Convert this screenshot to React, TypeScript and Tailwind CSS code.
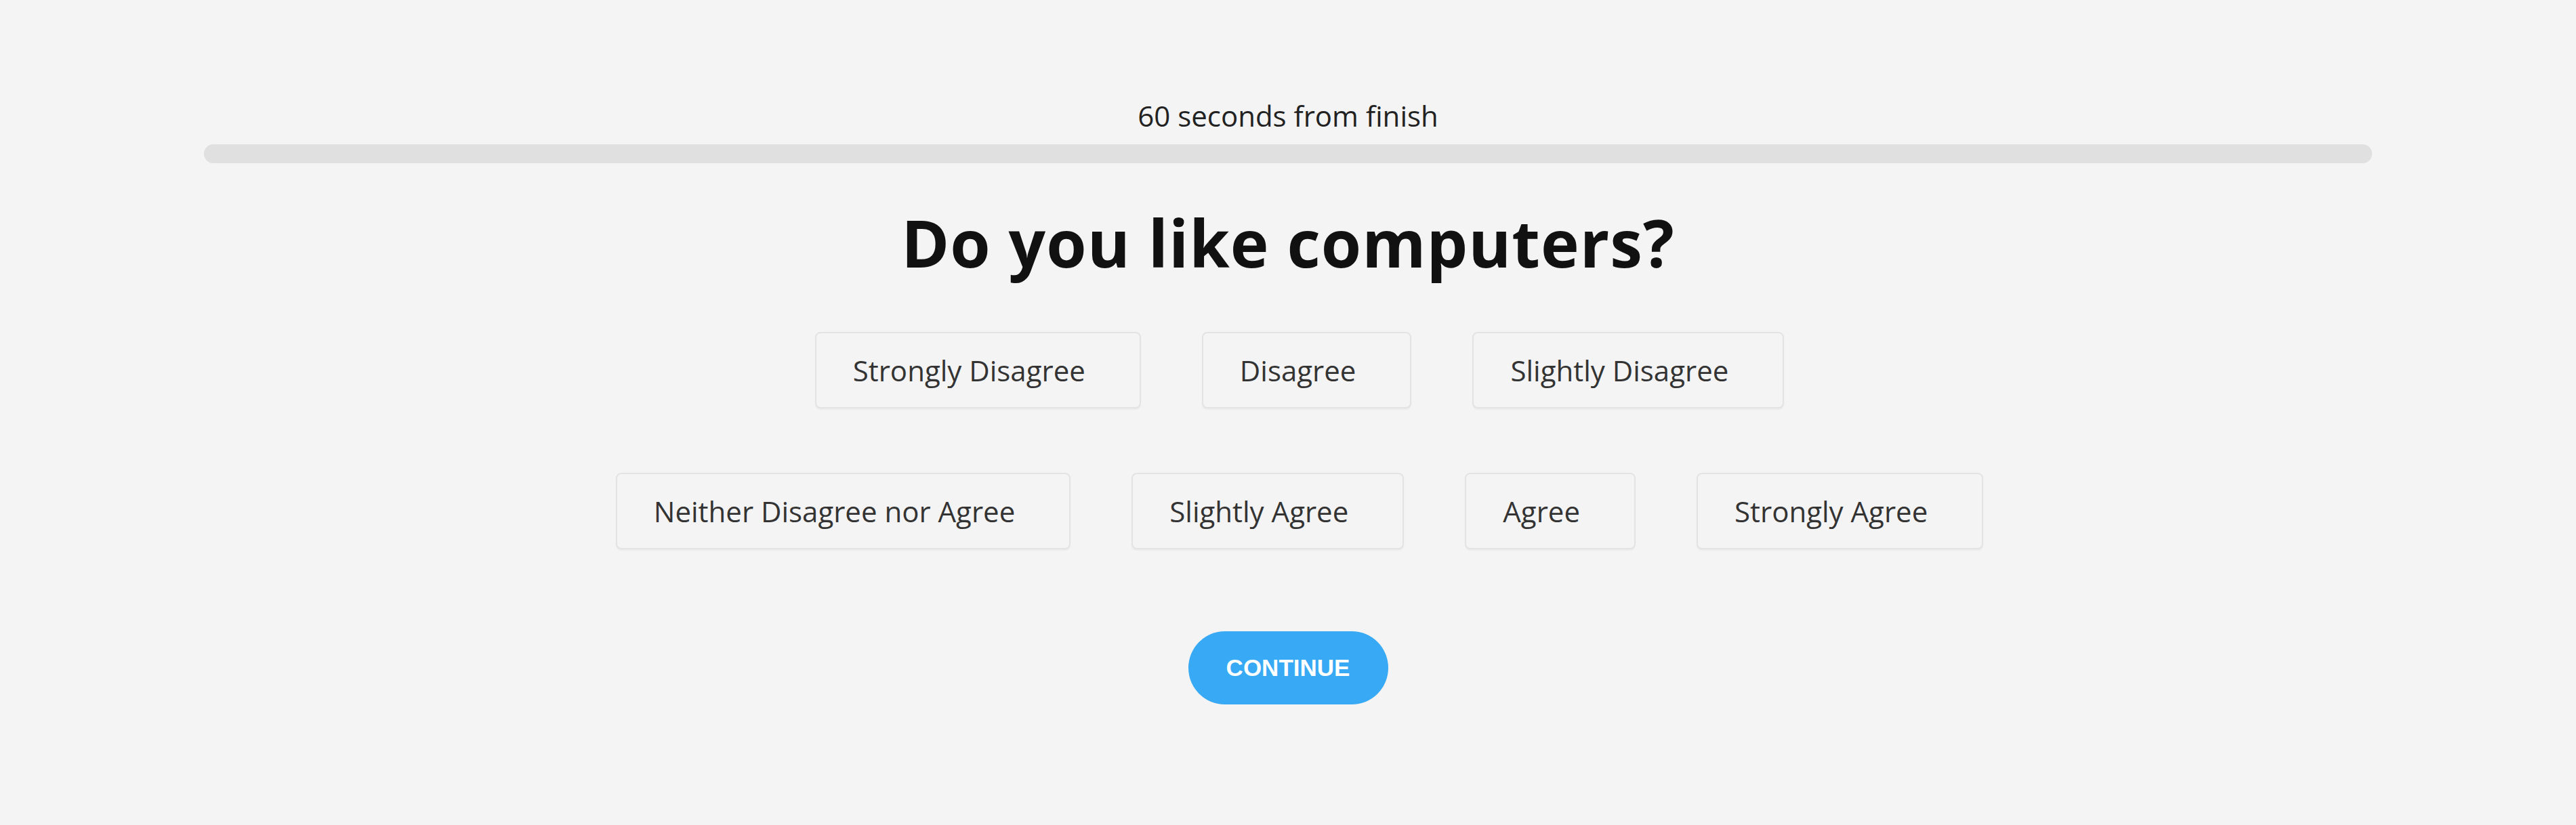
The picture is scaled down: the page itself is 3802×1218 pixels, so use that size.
import React from "react";

const row1 = ["Strongly Disagree", "Disagree", "Slightly Disagree"];
const row2 = ["Neither Disagree nor Agree", "Slightly Agree", "Agree", "Strongly Agree"];

function Option({ label }: { label: string }) {
  return (
    <button className="h-[113px] pl-[54px] pr-[80px] flex items-center rounded-[8px] border-2 border-[#e3e3e3] bg-[#f4f4f4] text-[42px] text-[#333333] shadow-[0_2px_2px_rgba(0,0,0,0.04)] whitespace-nowrap">
      {label}
    </button>
  );
}

export default function App() {
  return (
    <div
      className="min-h-screen w-full bg-[#f4f4f4] flex flex-col items-center"
      style={{ fontFamily: '"Open Sans", sans-serif' }}
    >
      <div className="pt-[142px] text-[42px] leading-[57px] text-[#222222]">60 seconds from finish</div>
      <div className="mt-[14px] w-[3200px] h-[28px] rounded-full bg-[#e0e0e0]" />
      <h1 className="mt-[59px] text-[96px] leading-[116px] font-bold tracking-[1px] text-[#111111]">Do you like computers?</h1>
      <div className="mt-[74px] flex justify-center gap-[90px] pl-[34px]">
        {row1.map((l) => (
          <Option key={l} label={l} />
        ))}
      </div>
      <div className="mt-[95px] flex justify-center gap-[90px] pl-[34px]">
        {row2.map((l) => (
          <Option key={l} label={l} />
        ))}
      </div>
      <button
        className="mt-[121px] w-[295px] h-[108px] rounded-full bg-[#38a9f4] text-white font-bold text-[35px] flex items-center justify-center"
        style={{ fontFamily: '"Liberation Sans", Arial, sans-serif' }}
      >
        CONTINUE
      </button>
    </div>
  );
}
